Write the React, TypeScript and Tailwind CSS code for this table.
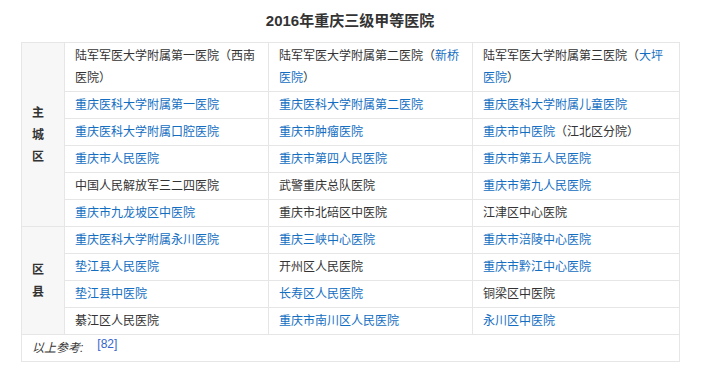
import React from "react";

type Cell = { parts: { t: string; link?: boolean }[] } | string;

const L = (t: string) => ({ t, link: true });
const N = (t: string) => ({ t });

const mainRows: { t: string; link?: boolean }[][][] = [
  [
    [N("陆军军医大学附属第一医院（西南"), { t: "\n" }, N("医院）")],
    [N("陆军军医大学附属第二医院（"), L("新桥"), { t: "\n" }, L("医院"), N("）")],
    [N("陆军军医大学附属第三医院（"), L("大坪"), { t: "\n" }, L("医院"), N("）")],
  ],
  [[L("重庆医科大学附属第一医院")], [L("重庆医科大学附属第二医院")], [L("重庆医科大学附属儿童医院")]],
  [[L("重庆医科大学附属口腔医院")], [L("重庆市肿瘤医院")], [L("重庆市中医院"), N("（江北区分院）")]],
  [[L("重庆市人民医院")], [L("重庆市第四人民医院")], [L("重庆市第五人民医院")]],
  [[N("中国人民解放军三二四医院")], [N("武警重庆总队医院")], [L("重庆市第九人民医院")]],
  [[L("重庆市九龙坡区中医院")], [N("重庆市北碚区中医院")], [N("江津区中心医院")]],
];

const countyRows: { t: string; link?: boolean }[][][] = [
  [[L("重庆医科大学附属永川医院")], [L("重庆三峡中心医院")], [L("重庆市涪陵中心医院")]],
  [[L("垫江县人民医院")], [N("开州区人民医院")], [L("重庆市黔江中心医院")]],
  [[L("垫江县中医院")], [L("长寿区人民医院")], [N("铜梁区中医院")]],
  [[N("綦江区人民医院")], [L("重庆市南川区人民医院")], [L("永川区中医院")]],
];

function Content({ parts }: { parts: { t: string; link?: boolean }[] }) {
  return (
    <>
      {parts.map((p, i) =>
        p.t === "\n" ? (
          <br key={i} />
        ) : p.link ? (
          <span key={i} className="text-[#136ec2]">
            {p.t}
          </span>
        ) : (
          <span key={i}>{p.t}</span>
        )
      )}
    </>
  );
}

const td = "border border-[#e6e6e6] px-[10px] py-[2px] align-middle text-left font-normal";
const th =
  "border border-[#e6e6e6] bg-[#f7f7f7] pl-[10px] pr-0 py-[2px] align-middle text-left font-bold";

export default function App() {
  return (
    <div
      className="w-[727px] h-[377px] bg-white text-[#333333] pl-[21px]"
      style={{ fontFamily: '"Liberation Sans", Arial, "Noto Sans CJK SC", sans-serif' }}
    >
      <div className="w-[658px] h-[42px] flex items-center justify-center text-[15px] font-bold text-[#333]">
        2016年重庆三级甲等医院
      </div>
      <table className="w-[658px] table-fixed border-collapse text-[12px] leading-[22px]">
        <colgroup>
          <col className="w-[43px]" />
          <col className="w-[204px]" />
          <col className="w-[204px]" />
          <col className="w-[207px]" />
        </colgroup>
        <tbody>
          {mainRows.map((row, ri) => (
            <tr key={"m" + ri}>
              {ri === 0 && (
                <th rowSpan={6} className={th}>
                  主<br />城<br />区
                </th>
              )}
              {row.map((c, ci) => (
                <td key={ci} className={td}>
                  <Content parts={c} />
                </td>
              ))}
            </tr>
          ))}
          {countyRows.map((row, ri) => (
            <tr key={"c" + ri}>
              {ri === 0 && (
                <th rowSpan={4} className={th}>
                  区<br />县
                </th>
              )}
              {row.map((c, ci) => (
                <td key={ci} className={td}>
                  <Content parts={c} />
                </td>
              ))}
            </tr>
          ))}
          <tr>
            <td colSpan={4} className={td}>
              <span className="italic">以上参考:</span>
              <sup className="ml-[14px] text-[12px] text-[#3366cc] not-italic top-[-4px] align-baseline relative">
                [82]
              </sup>
            </td>
          </tr>
        </tbody>
      </table>
    </div>
  );
}
